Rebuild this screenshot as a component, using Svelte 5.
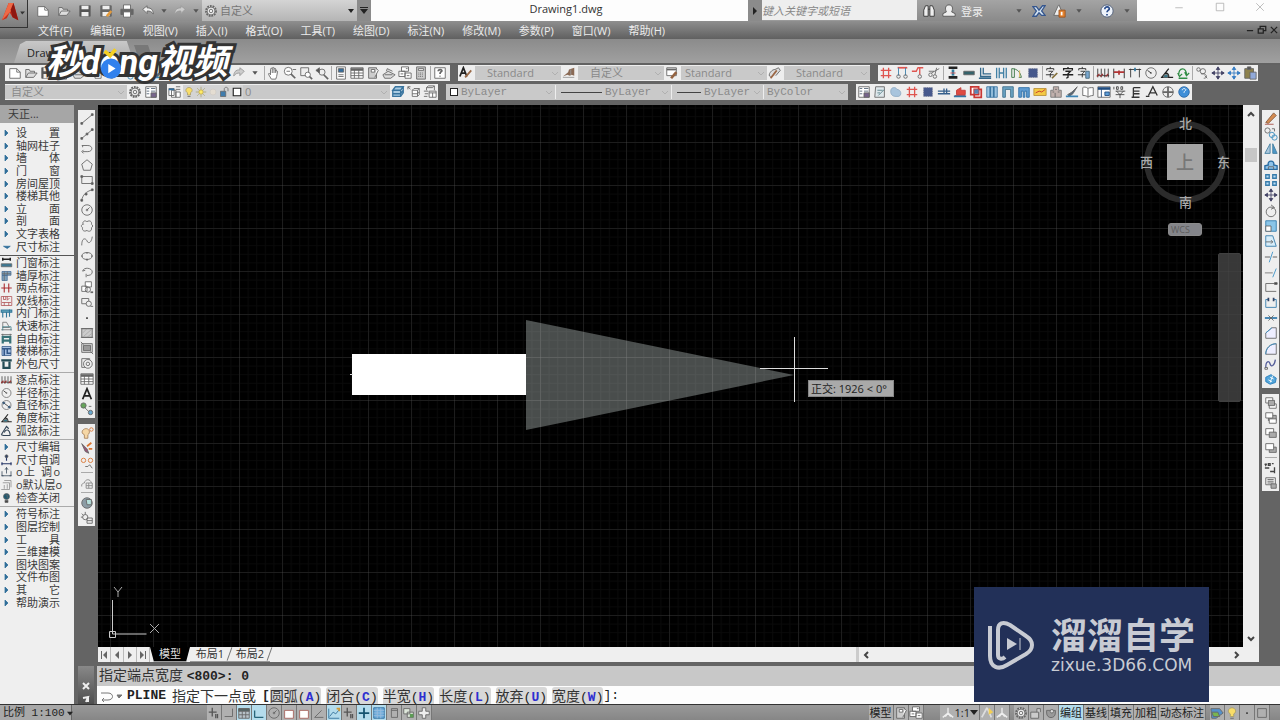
<script>
	const icons = {
		none: '',
		new: '<path d="M2 3h8l4 4v7H2z" fill="#fff"/><path d="M10 3v4h4"/>',
		open: '<path d="M2 13V4h4l1 2h5v2M2 13l3-5h10l-4 5z" fill="#ddd"/>',
		save: '<path d="M2 2h12v12H2z" fill="#555"/><path d="M4 2h8v4H4zM4 9h8v5H4z" fill="#eee" stroke="none"/>',
		saveas: '<path d="M2 2h12v12H2z" fill="#666"/><path d="M4 2h8v4H4zM4 9h8v5H4z" fill="#eee" stroke="none"/><path d="M9 14l5-6" stroke="#e39a3b" stroke-width="3"/>',
		print: '<path d="M4 6V1h8v5" fill="#fff"/><path d="M1 6h14v6H1z" fill="#666"/><path d="M4 9h8v6H4z" fill="#fff"/>',
		undo: '<path d="M2 6l5-4v2.500c5-.5 7 3 7 7-2-3-4-3.500-7-3.500V11z" fill="#eee" stroke="#666"/>',
		redo: '<path d="M14 6L9 2v2.500c-5-.5-7 3-7 7 2-3 4-3.500 7-3.500V11z" fill="#ccc" stroke="#999"/>',
		down: '<path d="M5 6h6l-3 4z" fill="#555" stroke="none"/>',
		gear: '<circle cx="8" cy="8" r="5.500" stroke="#666" fill="#eee" stroke-dasharray="2 1" stroke-width="2.500"/><circle cx="8" cy="8" r="4.500" fill="#eee" stroke="#666"/><circle cx="8" cy="8" r="2"/>',
		hand: '<path d="M5 15l-3-5c-1-2 1-2 2 0V4c0-2 2-2 2 0V3c0-2 2-2 2 0v1c0-2 2-2 2 0v2c1-1 2-1 2 1l-1 5-1 3zM6 4v4M8 4v4M10 4v4" fill="#fff"/>',
		zoom: '<circle cx="6" cy="6" r="4.500" fill="#fff"/><path d="M9 9l5 5" stroke-width="2"/><path d="M4 6h4M11 4h4"/>',
		zoomwin: '<path d="M2 2h9v9H2z"/><circle cx="10" cy="10" r="3" fill="#fff"/><path d="M12 12l3 3" stroke-width="2"/>',
		zoomprev: '<path d="M1 5l4-3v6z" fill="#555"/><circle cx="8" cy="7" r="3.500"/><path d="M10 10l5 5" stroke-width="2"/>',
		props: '<path d="M3 1h10v14H3z" fill="#fff"/><path d="M5 3h6v4H5z" fill="#326c9d"/><path d="M5 10h6M5 12h6"/>',
		table: '<path d="M1 2h14v12H1z" fill="#fff"/><path d="M1 4h14" stroke-width="3"/><path d="M1 8h14M1 11h14M5 4v10M10 4v10"/>',
		palette: '<path d="M3 2h9v12H3z" fill="#ccc"/><path d="M6 4h4v3H6zM12 3l2 2-4 8" fill="#fff"/>',
		sheet: '<path d="M1 10l6-4 8 4-5 4H3zM5 6l1-3 6 3" fill="#ddd"/><path d="M3 10h9"/>',
		copyset: '<path d="M4 1h8v5H4zM1 6h7v6H1zM8 8h7v6H8z" fill="#fff"/><path d="M3 9h3M10 11h3M9 3h2"/>',
		calc: '<path d="M3 1h10v14H3z" fill="#ccc"/><path d="M5 3h6v2H5z" fill="#fff"/><path d="M5 8h6M5 10h6M5 12h6" stroke-dasharray="1 1"/>',
		help: '<path d="M2 2h12v12H2z" fill="#fff"/><path d="M6 6c0-3 5-2 4 0-1 1-2 1-2 3M8 11v1" stroke-width="2"/>',
		textstyle: '<path d="M1 12L5 2l4 10M3 8h5" stroke="#222" stroke-width="2"/><path d="M7 13l7-8" stroke="#9a6a48" stroke-width="2"/>',
		dimstyle: '<path d="M1 12l6-5 1-3 6-2v9l-3-1-2 1-3-1z" fill="#8a6a55" stroke="none"/><path d="M1 13h13M10 4v6" stroke="#999"/>',
		tabstyle: '<path d="M2 2h11v9H2z" fill="#fff"/><path d="M2 4h11" stroke-width="2"/><path d="M7 14l6-7" stroke="#946341" stroke-width="3"/>',
		mlstyle: '<path d="M3 12c-4 0 0-8 5-8l4-2 2 3-5 6" fill="#ddd"/><path d="M3 14l7-9" stroke="#9c6745" stroke-width="2"/>',
		layers: '<path d="M1 4h6v8H1zM4 6h5v8H4zM9 2h5M9 5h5M9 8h5v6H9z" fill="#fff"/><path d="M1 4h6v2H1z" fill="#2d6da0" stroke="none"/>',
		bulb: '<path d="M6 12V9C2 7 4 2 8 2s6 5 2 7v3z" fill="#f9dd68" stroke="#a79b69"/><path d="M6 14h4"/>',
		sun: '<circle cx="8" cy="8" r="3" fill="#ffeb67" stroke="#b09a45"/><path d="M8 1v3M8 12v3M1 8h3M12 8h3M3 3l2 2M11 11l2 2M13 3l-2 2M3 13l2-2" stroke="#a7a26c"/>',
		sun2: '<circle cx="8" cy="8" r="4" fill="#e4ddd2" stroke="#d0cbc6"/>',
		lock: '<path d="M2 7h7v7H2z" fill="#407cac"/><path d="M7 7V4c0-3 5-3 5 0v3"/>',
		square: '<path d="M3 3h10v10H3z" fill="#fff" stroke="#222" stroke-width="1.500"/>',
		stack: '<path d="M2 6l3-4h9l-3 4zM2 6v7h9V6M14 2v7l-3 4M2 10h9l3-4" fill="#a9cbe2" stroke="#39749e" stroke-width="1.500"/>',
		stack2: '<path d="M6 6l2-2h6l-2 2zM6 6v7h6V6M14 4v7l-2 2M6 10h6l2-2" fill="#fff"/><path d="M1 2l3 3M1 2h3M1 2v3"/>',
		stack3: '<path d="M4 3l2-2h7l-2 2zM1 7h5M2 10h4M1 13h4M4 3v3M13 1v5" /><path d="M7 7h8v7H7zM7 9h8M11 9v5" fill="#fff"/>',
		grid: '<path d="M5 2v12M11 2v12M2 5h12M2 11h12" stroke="#df5550" stroke-width="1.500"/>',
		axis: '<path d="M3 2h11" stroke="#df5550" stroke-width="2"/><path d="M4 2v9M12 2v9" stroke="#3a80ab"/><circle cx="4" cy="12" r="2"/><circle cx="12" cy="12" r="2"/>',
		axis2: '<path d="M1 6h5l2-4h6M10 2v8" stroke="#df5550" stroke-width="1.500"/><circle cx="10" cy="12" r="2"/>',
		cut: '<circle cx="4" cy="10" r="2"/><circle cx="9" cy="12" r="2"/><path d="M5 8l9-5M9 10l2-8M2 6h6"/>',
		wall: '<path d="M3 2h10M3 13h10" stroke="#222" stroke-width="3"/><path d="M8 4v7" stroke="#337d9e" stroke-width="3"/><path d="M5 8h6" stroke="#d55"/>',
		beam: '<path d="M2 6h12v4H2z" fill="#35636b"/>',
		corner: '<path d="M3 2v10h12M6 2v7h9M1 14h14" stroke="#34698c" stroke-width="1.500"/>',
		par: '<path d="M3 2v12M6 2v12M11 2v12M14 2v12M6 8h5" stroke="#4281a5" stroke-width="1.500"/>',
		arc: '<path d="M2 13V3c7 0 10 5 11 10h-3M5 3v10H2" stroke="#35713f"/><path d="M11 5v8" stroke="#d8b24b"/>',
		column: '<path d="M3 3h10v10H3z" fill="#46588c" stroke="#69718d" stroke-dasharray="1 1"/>',
		char: '<path d="M8 1v2M3 5V3h10v2M5 6h6L8 9v4l-2 1M2 10h12" stroke="#222" stroke-width="1.500"/>',
		charedit: '<path d="M6 1v2M2 5V3h8v2M4 6h5L6 9v4M1 10h9" stroke="#222"/><path d="M8 14l6-6" stroke="#836f3a" stroke-width="2"/>',
		chartab: '<path d="M6 1v2M2 5V3h8v2M4 6h5L6 9v4M1 10h9" stroke="#222"/><path d="M10 6h4v8h-4z" fill="#7ba8d0" stroke="#467"/>',
		dims: '<path d="M2 3v10M6 3v10M10 3v10M14 3v10M1 11h14" stroke="#333"/><path d="M1 12l3-3M5 12l3-3M11 12l3-3" stroke="#9b3333" stroke-width="1.500"/>',
		dim2: '<path d="M2 3v11M14 3v11" stroke="#222"/><path d="M2 7h12M8 5v5" stroke="#b23535" stroke-width="2"/>',
		dim3: '<path d="M3 3v10M13 3v10M1 4h14" stroke="#333"/><path d="M8 2v4" stroke="#357aa1" stroke-width="2"/>',
		radius: '<circle cx="8" cy="8" r="6"/><path d="M8 8L4 5M7 8h2" stroke="#222"/>',
		diameter: '<circle cx="8" cy="8" r="6"/><path d="M4 5l8 6" stroke="#222"/><path d="M3 4l3 1-2 2zM13 12l-3-1 2-2z" fill="#357" stroke="#357"/>',
		angle: '<path d="M1 13h14M2 13L10 3M6 8c3 0 4 2 4 5" stroke="#222" stroke-width="1.500"/><path d="M5 10h4v3H4z" fill="#2f7b91"/>',
		chord: '<path d="M1 13L8 2l3 3M3 14h10M5 10c2-5 7-5 8 4M1 13l3 1" stroke="#345" stroke-width="1.500"/>',
		arcdim: '<path d="M3 11C3 1 12 1 12 10M2 8l2 4 3-3M10 7l2 4 3-3M3 14h10" stroke="#318d45" stroke-width="1.500"/>',
		loop: '<circle cx="4" cy="4" r="2"/><circle cx="9" cy="6" r="3"/><path d="M7 9c7-1 8 5 3 5M11 11l3 3"/>',
		move: '<path d="M8 1v14M1 8h14M8 1L6 4h4zM8 15l-2-3h4zM1 8l3-2v4zM15 8l-3-2v4z" fill="#446" stroke="#446"/>',
		moveblue: '<path d="M8 1v14M1 8h14M8 1L6 4h4zM8 15l-2-3h4zM1 8l3-2v4zM15 8l-3-2v4z" fill="#357bc2" stroke="#357bc2"/>',
		paste: '<path d="M2 3h10v11H2z" fill="#8d814b"/><path d="M5 1h4v3H5z" fill="#555"/><path d="M8 7h7v8H8z" fill="#91a9d8"/>',
		list: '<path d="M2 2h12v12H2z" fill="#fff"/><path d="M3 4h3M3 7h3M3 10h3M8 4h5M8 7h5" stroke="#567"/><path d="M8 9h6v5H8z" fill="#76648c"/>',
		note: '<path d="M3 2h10v12H2z" fill="#dfe8ec"/><path d="M5 6h6M5 9h3M6 12l7-7" stroke="#577f87"/>',
		cloud: '<path d="M2 7c0-5 6-5 7-2 5 0 6 7 2 8H8C3 13 2 10 2 7z" fill="#a8c4dd" stroke="#8faac2"/>',
		wallfx: '<path d="M1 7h14M1 10h14M8 4v6M11 4v6" stroke="#355f8c" stroke-width="1.500"/>',
		roof: '<path d="M2 12h12M4 11V6l5-3v3h5v5z" fill="#df4a41" stroke="#c63b38"/><path d="M1 13h14" stroke="#3276a4" stroke-width="2"/>',
		room: '<path d="M2 2h9v9H2zM6 5h8v9H6z" fill="#fff" stroke="#c93733" stroke-width="2"/><path d="M6 5h5v5H6z" fill="#5787b5" stroke="none"/>',
		bluepanel: '<path d="M2 2h12v12H2z" fill="#9dc5e2" stroke="#3b76a2"/><path d="M6 2v12M10 2v12" stroke="#3b76a2" stroke-width="2"/>',
		door: '<path d="M2 14V2h12v12h-3V5H5v9z" fill="#6ca5c5" stroke="#3e6f8b"/>',
		door2: '<path d="M2 14V3h12v11h-3V7H9v7H7V7H5v7z" fill="#5e9bd1" stroke="#2d6ea5"/>',
		yellow: '<path d="M1 4h14v8H1z" fill="#f4c944" stroke="#b8923b"/><path d="M3 9l4-2 3 1 4-3" stroke="#c4332c"/>',
		building: '<path d="M2 14V6h3V2h6v4h3v8z" fill="#c0b0ac" stroke="#777"/><path d="M4 8h2M7 5h2M10 8h2M7 9v5"/>',
		brush: '<path d="M3 11l5-3 6-6-5 8-4 3z" fill="#567"/><path d="M1 13h14" stroke="#3c84b4" stroke-width="2"/>',
		book: '<path d="M8 4c-2-2-5-2-6-1v9c2 0 4 0 6 2 1-1 3-2 6-2V3c-3 0-5 0-6 1zM8 4v10" fill="#fff"/>',
		tableblue: '<path d="M1 2h14v12H1z" fill="#fff"/><path d="M1 4h14" stroke="#214d80" stroke-width="3"/><path d="M5 4v10M9 8h5v4H9z" fill="#5e9ed6" stroke="#214d80"/>',
		vlabel: '<path d="M1 2v3M4 2h2v3H4zM9 2h2v3H9zM3 7h11M4 7l4 4 4-4M3 11h10M8 11v4" stroke="#444"/>',
		levels: '<path d="M5 3v11M3 14h9M5 3h8M5 7h7M5 10h7" stroke="#333" stroke-width="1.500"/>',
		letter: '<path d="M4 12L9 2l5 10M6 9h6M1 13h4" stroke="#333" stroke-width="1.500"/>',
		compass: '<circle cx="8" cy="8" r="6"/><path d="M8 2v12M2 8h12" stroke-width="2"/>',
		qblue: '<circle cx="8" cy="8" r="6" fill="#3f8fd8" stroke="#2a69a8"/><path d="M6 6c0-3 5-2 4 0-1 1-2 1-2 3" stroke="#fff"/>',
		line: '<path d="M2 13L14 3"/><path d="M1 12h2v2H1zM13 2h2v2h-2z" fill="#555"/>',
		xline: '<path d="M2 13L14 3"/><path d="M1 12h2v2H1zM13 2h2v2h-2zM7 7h2v2H7z" fill="#555"/>',
		pline: '<path d="M2 4h7c6 0 6 7 0 7H3M4 9l-2 2 2 2M3 4v2"/>',
		polygon: '<path d="M8 2l6 5-2 7H4L2 7z"/>',
		rect: '<path d="M2 4h12v8H2z"/><path d="M1 3h2v2H1zM13 11h2v2h-2z" fill="#555"/>',
		curve: '<path d="M2 14C3 8 7 4 14 2"/><path d="M1 13h2v2H1zM6 6h2v2H6zM13 1h2v2h-2z" fill="#444"/>',
		circle: '<circle cx="8" cy="8" r="6"/><circle cx="8" cy="8" r="1"/><path d="M8 8l3-3"/>',
		revcloud: '<path d="M4 3c2-2 3 0 4 0 3-2 6 0 5 3 2 1 2 3 0 4 1 4-3 5-5 3-3 2-6 0-5-3-2-1-2-4 1-4-1-1-1-2 0-3z"/>',
		spline: '<path d="M2 13C2 3 7 5 8 8s5 3 6-5"/>',
		ellipse: '<ellipse cx="8" cy="8" rx="6" ry="4"/><path d="M8 4v1M8 11v2M2 8h1M13 8h1" stroke-width="2"/>',
		ellarc: '<path d="M3 7c1-5 11-4 11 1 0 3-3 4-6 4M7 10v4M3 7l3-1"/>',
		insert: '<path d="M6 2h7v6H6zM2 7h6v6H2z" fill="#fff"/><circle cx="9" cy="11" r="3"/><path d="M12 14h3" stroke-width="2"/>',
		block: '<path d="M2 4h8v6H2z"/><circle cx="10" cy="10" r="3" fill="#eee"/><path d="M12 13h3"/>',
		dot: '<path d="M7 7h2v2H7z" fill="#444" stroke="none"/>',
		hatch: '<path d="M2 3h12v10H2z" fill="#ccc"/><path d="M4 12l9-8M3 8l5-5M8 13l6-5" stroke="#aaa"/><path d="M1 3h14M1 13h14"/>',
		gradient: '<path d="M2 3h12v10H2z" fill="#ddd"/><path d="M4 5h8v6H4z" fill="#999"/><path d="M1 1l3 3M12 12l3 3"/>',
		region: '<path d="M2 3h9v10H2z"/><circle cx="9" cy="9" r="5" fill="#eee"/><circle cx="9" cy="9" r="2"/>',
		mtext: '<path d="M3 14L8 2l5 12M5 10h6" stroke="#222" stroke-width="2"/>',
		nodes: '<circle cx="4" cy="4" r="3" fill="#65a45a"/><circle cx="12" cy="12" r="2.500" fill="#68a9d0"/><path d="M5 6l5 5M10 5h3"/>',
		bulbo: '<path d="M5 14v-4C0 8 3 3 7 3s5 5 2 7v4z" fill="#f6d7a5" stroke="#a8845f"/><circle cx="13" cy="4" r="2" stroke="#d97632"/>',
		brusho: '<path d="M2 3l6 6 2 5-4-2z" fill="#957"/><path d="M8 6l5-4M10 9h4" stroke="#d97632" stroke-width="2"/>',
		dotso: '<circle cx="4" cy="5" r="2.500" stroke="#d97632"/><circle cx="12" cy="5" r="2.500" stroke="#d97632"/><path d="M6 12h3l2-2 3 4"/>',
		cloudgrid: '<path d="M2 12c-1-3 2-4 3-4 1-5 7-5 8 0M7 8h7v6H7zM7 11h7M10 8v6" stroke="#888"/>',
		globe: '<circle cx="8" cy="8" r="6" fill="#8c9ca5"/><path d="M7 4h6v6H8z" fill="#b6e0dc"/>',
		sungrid: '<circle cx="6" cy="7" r="3"/><path d="M6 1v3M1 7h2M2 3l2 2M8 8h6v6H8zM8 11h6"/>',
		eraser: '<path d="M2 12L11 1l3 3-9 9z" fill="#d48b51" stroke="#855c40"/><path d="M1 14h10" stroke="#a64e45"/>',
		copy: '<circle cx="4" cy="4" r="3"/><circle cx="9" cy="9" r="3" stroke="#398bbd"/><circle cx="12" cy="12" r="3" stroke="#398bbd"/><path d="M9 2h3v3"/>',
		mirror: '<path d="M7 2v11H1z" fill="#aac7dc" stroke="#437e9f"/><path d="M10 2v11h5z" fill="#4f99c8" stroke="#437e9f"/>',
		offset: '<path d="M1 13V9l4-1c-2-6 8-6 6 0l4 1v4z" fill="#8fc3e8" stroke="#286ca3" stroke-width="1.500"/><path d="M5 13v-3h6v3"/>',
		array: '<path d="M2 2h4v4H2zM10 2h4v4h-4zM2 10h4v4H2zM10 10h4v4h-4z" fill="#b9dcf5" stroke="#377cab" stroke-width="1.500"/>',
		ring: '<circle cx="8" cy="9" r="5.500"/><path d="M8 1l4 3-4 2"/>',
		scale: '<path d="M2 2h12v12H2z" fill="#8ac5e8" stroke="#347bad"/><path d="M2 8h6v6H2z" fill="#fff"/>',
		stretch: '<path d="M2 2h8l4 12H2z" fill="#d8edf9" stroke="#347bad"/><path d="M2 9h8M8 7l2 2-2 2"/>',
		trim: '<path d="M1 8h6M10 8h5" stroke="#555"/><path d="M6 14l4-12" stroke="#3a91c7"/>',
		extend: '<path d="M1 9h9" stroke="#777"/><path d="M10 14l4-10" stroke="#3a91c7"/>',
		break1: '<path d="M2 13V4h11M2 13h12"/><path d="M12 3h3v2h-3z" fill="#444"/>',
		break2: '<path d="M5 4H2v9h12V4h-3" stroke="#347bad"/><path d="M5 2v4M11 2v4" stroke="#346" stroke-width="2"/>',
		join: '<path d="M1 8h14" stroke="#347bad" stroke-width="2"/><path d="M5 5l3 3-3 3M11 5L8 8l3 3"/>',
		chamfer: '<path d="M2 14V8l7-6h5v12z" fill="#eef"/><path d="M2 8l7-6" stroke="#3a91c7"/>',
		fillet: '<path d="M2 14C2 7 7 2 14 2v12z" fill="#eef"/><path d="M2 14C2 7 7 2 14 2" stroke="#3a91c7"/>',
		blend: '<path d="M2 12C2 4 6 4 7 8s5 2 6-5" stroke="#555e9a" stroke-width="1.500"/><path d="M1 12h3v2H1z"/>',
		explode: '<path d="M2 6l6-3 6 4-1 5-6 2-5-3z" fill="#54a5d9" stroke="#257dbb"/><path d="M7 6l4 2M5 9l4 2M10 4L7 12" stroke="#fff"/>',
		order: '<path d="M2 2h8v6H2zM6 9h8v5H6z" fill="#fff"/><path d="M5 5h7v6H5z" fill="#aaa"/>',
		order2: '<path d="M5 5h9v6H5z" fill="#aaa"/><path d="M2 2h8v6H2zM6 9h8v5H6z" fill="#fff"/>',
		order3: '<path d="M2 3h9v7H2z" fill="#fff"/><path d="M6 7h8v6H6z" fill="#aaa"/>',
		order4: '<path d="M6 7h8v6H6z" fill="#aaa"/><path d="M2 3h9v7H2z" fill="#fff"/>',
		abc: '<path d="M1 3l1 2 1-2M5 3h2v2H5zM9 3h2M1 8h5M12 7v5H7M12 12v2" stroke="#444" stroke-width="1.500"/>',
		order5: '<path d="M2 2h11v8H2zM4 4h7M4 6h7M4 8h7"/><path d="M8 9h6v5H8z" fill="#aaa"/>',
		windim: '<path d="M2 3h12M3 1v4M13 1v4" stroke="#222" stroke-width="2"/><path d="M1 9h14v4H1z" fill="#3c7792"/>',
		thick: '<path d="M2 2h12v5H2zM2 7h7v7H2z" fill="#7fa2bd" stroke="#466e97"/><path d="M2 5h12M5 2v12M9 2v5"/>',
		redcross: '<path d="M1 8h14M5 2v12M11 2v12M4 7l2 2M10 9l2-2" stroke="#ac3136" stroke-width="1.500"/>',
		redbox: '<path d="M1 2v12h14V2zM4 2v4h3V2M9 2v5l3-3M2 10h12M5 10v4M11 10v4" stroke="#ac4a4e"/>',
		indoor: '<path d="M1 4h14v3H1zM3 7v7M8 7v7M12 3v10" fill="#61a5bb" stroke="#347799" stroke-width="1.500"/>',
		quick: '<path d="M3 10V3h5l4 7H3zM1 13h14" fill="#eee"/><path d="M3 14V9h11v5" stroke="#367986"/>',
		tee: '<path d="M3 14V5h10v9M3 10h10" stroke="#387277" stroke-width="3"/><path d="M1 2h14M3 1v3M13 1v3"/>',
		stairs: '<path d="M2 2h12v12H2z" fill="#a6bfe0" stroke="#335787"/><path d="M2 5h12M5 6v8M9 6v5h5" stroke="#335787" stroke-width="2"/>',
		outer: '<path d="M1 3h14M4 5v8h8V5" stroke="#234b55" stroke-width="3"/>',
		selfdim: '<path d="M8 2v7M1 13h14M2 11v4M14 11v4" stroke="#243466" stroke-width="1.500"/><circle cx="8" cy="3" r="2" fill="#346"/>',
		tune: '<path d="M2 7v6h12V7M8 2v8M6 5l2-3 2 3M1 13h3M12 13h3" stroke="#345"/>',
		layer: '<path d="M5 2h9v9M3 5h9v9H1M5 8v5M9 7v6" stroke="#888"/>',
		check: '<circle cx="8" cy="6" r="4" fill="#1e5870"/><path d="M6 11h4v3H6z" fill="#444"/><path d="M7 4h2v4"/>',
		right: '<path d="M6 4l4 4-4 4z" fill="#2f6e9a" stroke="#2f6e9a"/>',
		collapse: '<path d="M4 7h9l-4 3z" fill="#2f6e9a" stroke="#2f6e9a"/>',
		binoc: '<path d="M2 14V7l2-5h3v12H2zM9 14V2h3l2 5v7H9zM7 6h2" fill="#eee" stroke="#333"/>',
		user: '<path d="M5 9C3 5 4 1 8 1s5 4 3 8l4 2v3H1v-3z" fill="#eee" stroke="#555"/>',
		exchange: '<path d="M1 3h4l3 4 4-5h3l-4 6 4 5h-4l-3-3-3 4H1l4-6z" fill="#d4e4f2" stroke="#35568e" stroke-width="1.500"/>',
		thumb: '<path d="M8 1l5 12H2L7 2z" fill="#eee"/><path d="M8 7h7v8H8z" fill="#e48330" stroke="#9d541c"/><path d="M11 9v4" stroke="#fff" stroke-width="2"/>',
		helpround: '<circle cx="8" cy="8" r="7" fill="#eef3fa" stroke="#4c5c78"/><path d="M5.500 6c0-4 6-3 5 0-.5 1-2.500 1.500-2.500 3.500M8 11.500v1.500" stroke="#2b4d8c" stroke-width="2"/>',
		min: '<path d="M3 9h10"/>',
		max: '<path d="M3 3h10v10H3z"/>',
		restore: '<path d="M5 6V2h9v7h-4M2 6h8v7H2z"/>',
		close: '<path d="M3 3l10 10M13 3L3 13"/>',
		snap: '<path d="M6 2v10M2 7h9M10 9v5M12 9v5" stroke="#555" stroke-width="1.500"/>',
		ortho: '<path d="M12 3v9H3"/>',
		statgrid: '<path d="M2 3h12v11H2z" fill="#b7c2c8"/><path d="M2 3h12v3H2z" fill="#566"/><path d="M6 6v8M10 6v8M2 10h12"/>',
		polar: '<path d="M3 13V5M3 13h10" stroke="#286579" stroke-width="1.500"/>',
		osnap: '<path d="M3 5h10v9H3z" fill="#fff" stroke="#a7625b"/>',
		ang: '<path d="M13 13H3l8-8"/>',
		plus: '<path d="M8 2v12M2 8h12" stroke="#14536f" stroke-width="2"/>',
		graph: '<path d="M2 3v11h12M3 12l4-5 3 2 4-5" stroke="#34719a"/><path d="M11 3h3v3" stroke="#d29a36" stroke-width="2"/>',
		pad: '<path d="M5 3h7v10H5z"/><path d="M5 5h7"/>',
		bluegrid: '<path d="M2 2h12v12H2z" fill="#6daddb" stroke="#2f6999"/><path d="M2 5h12M2 8h12M2 11h12M6 2v12M10 2v12" stroke="#9bd"/>',
		greencopy: '<path d="M2 3h7v6H2zM6 7h7v6H6z" fill="#dfe8dc"/><path d="M9 9h4v4H9z" fill="#5c9c55" stroke="none"/>',
		whiteplus: '<path d="M6 2h4v4h4v4h-4v4H6v-4H2V6h4z" fill="#eee"/>',
		person: '<path d="M8 2v6M8 8l-6 5M8 8l6 5M5 12l3-4 3 4" stroke="#eee" stroke-width="1.500"/>',
		scalestar: '<path d="M8 2l-6 11M8 2l5 11" stroke="#ddd" stroke-width="2"/><path d="M10 2l5 5-5 3z" fill="#f4cf53" stroke="none"/>',
		padlock: '<path d="M2 7h9v7H2zM9 7V3h4v4" fill="#ccc"/>',
		ball: '<path d="M3 5h10v3c0 7-10 7-10 0z" fill="#999"/><circle cx="9" cy="6" r="2" fill="#ddd"/>',
		tray: '<path d="M1 3h10l4 5-8 6H2z" fill="#5491cb"/><path d="M2 7h7l2 5H4z" fill="#79b550"/>'
	};

	const quick = ['new', 'open', 'save', 'saveas', 'print', 'undo', 'down', 'redo', 'down'];
	const menus = ['文件(F)', '编辑(E)', '视图(V)', '插入(I)', '格式(O)', '工具(T)', '绘图(D)', '标注(N)', '修改(M)', '参数(P)', '窗口(W)', '帮助(H)'];
	const standard = ['new', 'open', 'save', 'print', 'sheet', 'copyset', 'cut', 'copy', 'paste', 'brush', 'block', 'undo', 'down', 'none', 'redo', 'down', '|', 'hand', 'zoom', 'zoomwin', 'zoomprev', '|', 'props', 'table', 'palette', 'sheet', 'copyset', 'calc', '|', 'help'];
	const styles = [
		{ icon: 'textstyle', label: 'Standard', name: '文字样式' },
		{ icon: 'dimstyle', label: '自定义', name: '标注样式' },
		{ icon: 'tabstyle', label: 'Standard', name: '表格样式' },
		{ icon: 'mlstyle', label: 'Standard', name: '多重引线样式' }
	];
	const tarch1 = ['grid', 'axis', 'axis2', 'cut', '|', 'wall', 'beam', 'corner', 'par', 'arc', 'column', '|', 'charedit', 'char', 'chartab', '|', 'dims', 'dim2', 'dim3', 'radius', 'angle', 'arcdim', '|', 'loop', 'move', 'moveblue', 'paste'];
	const tarch2 = ['list', 'note', 'cloud', 'grid', 'column', 'wallfx', 'roof', 'room', 'bluepanel', 'door', 'door2', 'yellow', 'building', 'brush', 'book', 'tableblue', 'vlabel', 'levels', 'letter', 'compass', 'qblue'];
	const draw = ['line', 'xline', 'pline', 'polygon', 'rect', 'curve', 'circle', 'revcloud', 'spline', 'ellipse', 'ellarc', 'insert', 'block', 'dot', 'hatch', 'gradient', 'region', 'table', 'mtext', 'nodes'];
	const draw2 = ['bulbo', 'brusho', 'dotso', '|', 'cloudgrid', '|', 'globe', 'sungrid'];
	const modify = ['eraser', 'copy', 'mirror', 'offset', 'array', 'move', 'ring', 'scale', 'stretch', 'trim', 'extend', 'break1', 'break2', 'join', 'chamfer', 'fillet', 'blend', 'explode'];
	const modify2 = ['order', 'order2', 'order3', 'order4', '|', 'abc', 'order5'];

	const groups = [
		{ size: 'ten', rows: [['right', '设 置'], ['right', '轴网柱子'], ['right', '墙 体'], ['right', '门 窗'], ['right', '房间屋顶'], ['right', '楼梯其他'], ['right', '立 面'], ['right', '剖 面'], ['right', '文字表格'], ['collapse', '尺寸标注']] },
		{ size: 'nine', rows: [['windim', '门窗标注'], ['thick', '墙厚标注'], ['redcross', '两点标注'], ['redbox', '双线标注'], ['indoor', '内门标注'], ['quick', '快速标注'], ['tee', '自由标注'], ['stairs', '楼梯标注'], ['outer', '外包尺寸']] },
		{ size: 'five', rows: [['dims', '逐点标注'], ['radius', '半径标注'], ['diameter', '直径标注'], ['angle', '角度标注'], ['chord', '弧弦标注']] },
		{ size: 'five', rows: [['right', '尺寸编辑'], ['selfdim', '尺寸自调'], ['tune', 'o上 调o'], ['layer', 'o默认层o'], ['check', '检查关闭']] },
		{ size: 'eight', rows: [['right', '符号标注'], ['right', '图层控制'], ['right', '工 具'], ['right', '三维建模'], ['right', '图块图案'], ['right', '文件布图'], ['right', '其 它'], ['right', '帮助演示']] }
	];

	const options = [['圆弧', 'A'], ['闭合', 'C'], ['半宽', 'H'], ['长度', 'L'], ['放弃', 'U'], ['宽度', 'W']];
	const toggles = ['snap', 'ortho', 'statgrid', 'polar', 'circle', 'osnap', 'osnap', 'ang', 'graph', 'snap', 'plus', 'bluegrid', 'pad', 'greencopy', 'whiteplus'];
	const lit = [2, 3, 8, 10, 11];
	const modes = ['编组', '基线', '填充', '加粗', '动态标注'];
</script>

{#snippet icon(name)}
	<svg class="icon" viewBox="0 0 16 16" aria-hidden="true">{@html icons[name]}</svg>
{/snippet}

{#snippet bar(list)}
	{#each list as name}
		{#if name === '|'}
			<span class="sep"></span>
		{:else}
			<button class="tool" aria-label={name}>{@render icon(name)}</button>
		{/if}
	{/each}
{/snippet}

{#snippet combo(label, name, kind)}
	<span class="combo {kind}">
		<select aria-label={name}><option>{label}</option></select>
		<svg class="chevron" viewBox="0 0 8 8" aria-hidden="true"><path d="M1 3l3 3 3-3" /></svg>
	</span>
{/snippet}

<div class="app">
	<header class="titlebar">
		<button class="logo" aria-label="菜单">
			<svg viewBox="0 0 28 28" aria-hidden="true">
				<path d="M2 21L9 3h5l5 18-6-3-3-5-3 6z" fill="#c6301c" />
				<path d="M9 3h5l-2 8-10 10z" fill="#ef6946" />
				<path d="M14 3l5 18-6-3-2-8z" fill="#8f1710" />
				<path d="M21 12h5l-3 3z" fill="#333" />
			</svg>
		</button>
		<div class="quick">{@render bar(quick)}</div>
		<div class="workspace">
			{@render icon('gear')}
			<select aria-label="工作空间"><option>自定义</option></select>
			<svg class="arrow" viewBox="0 0 8 8" aria-hidden="true"><path d="M1 2h6L4 6z" /></svg>
		</div>
		<button class="more" aria-label="更多"><svg class="arrow" viewBox="0 0 8 8"><path d="M0 0h8v1H0zM0 2h8L4 7z" /></svg></button>
		<h1>Drawing1.dwg</h1>
		<button class="expand" aria-label="展开"><svg class="arrow" viewBox="0 0 8 8"><path d="M2 0v8l4-4z" /></svg></button>
		<input class="search" type="text" aria-label="搜索" placeholder="键入关键字或短语" />
		<div class="account">
			{@render bar(['binoc', 'user'])}
			<a href="#login">登录</a>
			<span class="space"></span>
			{@render bar(['down', 'exchange', 'thumb', 'down'])}
			<span class="gap"></span>
			{@render bar(['helpround', 'down'])}
		</div>
		<div class="window">{@render bar(['min', 'max', 'close'])}</div>
	</header>

	<nav class="menubar">
		{#each menus as menu}<button>{menu}</button>{/each}
		<div class="child">{@render bar(['min', 'restore', 'close'])}</div>
	</nav>

	<div class="docs">
		<button class="doc">Draw</button>
		<button class="adddoc" aria-label="新建图形"></button>
		<div class="brand">秒d<span class="ball">o<svg viewBox="0 0 24 34" aria-hidden="true"><path d="M5 3l6 5 6-7" fill="none" stroke="#f5cf22" stroke-width="4" /><circle cx="12" cy="22" r="11" fill="#3181ed" /><path d="M9 17l8 5-8 5z" fill="#fff" /></svg></span>ng视频</div>
	</div>

	<div class="toolrow">
		<div class="strip std">{@render bar(standard)}</div>
		<div class="strip">
			{#each styles as s}
				<span class="styleitem">
					{@render icon(s.icon)}
					{@render combo(s.label, s.name, 'style')}
				</span>
			{/each}
		</div>
		<div class="strip">{@render bar(tarch1)}</div>
	</div>

	<div class="toolrow">
		<div class="strip">
			{@render combo('自定义', '工作空间', 'ws')}
			{@render bar(['gear', 'list'])}
		</div>
		<div class="strip">
			{@render bar(['layers'])}
			<span class="layerstate">
				{#each ['bulb', 'sun', 'sun2', 'lock', 'square'] as name}{@render icon(name)}{/each}
			</span>
			{@render combo('0', '图层', 'layer')}
			{@render bar(['stack', 'stack2', 'stack3'])}
		</div>
		<div class="strip plain">
			<span class="prop"><span class="swatch"></span>{@render combo('ByLayer', '颜色', 'mono')}</span>
			<span class="prop"><span class="rule"></span>{@render combo('ByLayer', '线型', 'mono')}</span>
			<span class="prop"><span class="rule short"></span>{@render combo('ByLayer', '线宽', 'mono')}</span>
			<span class="prop">{@render combo('ByColor', '打印样式', 'mono')}</span>
		</div>
		<div class="strip">{@render bar(tarch2)}</div>
	</div>

	<main>
		<aside class="palette">
			<h2>天正...</h2>
			{#each groups as group}
				<ul class={group.size}>
					{#each group.rows as [glyph, text]}
						<li>{@render icon(glyph)}<button>{text}</button></li>
					{/each}
				</ul>
			{/each}
		</aside>

		<div class="right">
			<div class="stage">
				<div class="side">
					<div class="column tall">{@render bar(draw)}</div>
					<div class="column">{@render bar(draw2)}</div>
				</div>

				<div class="view">
					<div class="canvasrow">
						<div class="canvas">
							<svg class="drawing" aria-hidden="true">
								<defs>
									<pattern id="minor" width="8.6" height="8.6" patternUnits="userSpaceOnUse" x="12" y="37">
										<path d="M0 .5h9M.5 0v9" stroke="#fff" stroke-opacity=".04" />
									</pattern>
									<pattern id="major" width="43" height="43" patternUnits="userSpaceOnUse" x="12" y="37">
										<path d="M0 .5h43M.5 0v43" stroke="#fff" stroke-opacity=".08" />
									</pattern>
								</defs>
								<path d="M428 215v110l268-55z" fill="#494d4c" />
								<rect width="100%" height="100%" fill="url(#minor)" />
								<rect width="100%" height="100%" fill="url(#major)" />
								<path d="M254 249h174v41H254z" fill="#fff" />
								<path d="M252 269.500h3M662 263.500h68M696.500 232v65" stroke="#ddd" />
								<path d="M14.500 495v34h34M11.500 526.500h6v6h-6z" stroke="#ccc" fill="none" />
								<path d="M16 482l4 5 4-5M20 487v5M52 519l9 9M61 519l-9 9" stroke="#aaa" fill="none" />
							</svg>
							<output class="tip">正交: 1926 &lt; 0°</output>
							<div class="cube">
								<span class="n">北</span><span class="w">西</span>
								<button>上</button>
								<span class="e">东</span><span class="s">南</span>
							</div>
							<button class="wcs">WCS</button>
							<div class="navbar"></div>
						</div>
						<div class="vscroll">
							<button aria-label="向上"><svg viewBox="0 0 8 8"><path d="M1 6l3-3 3 3" /></svg></button>
							<span class="thumb"></span>
							<button aria-label="向下"><svg viewBox="0 0 8 8"><path d="M1 2l3 3 3-3" /></svg></button>
						</div>
					</div>
					<div class="tabs">
						<button class="step" aria-label="第一个"><svg viewBox="0 0 8 8"><path d="M1 0h1v8H1zM7 0v8L3 4z" /></svg></button>
						<button class="step" aria-label="上一个"><svg viewBox="0 0 8 8"><path d="M6 0v8L2 4z" /></svg></button>
						<button class="step" aria-label="下一个"><svg viewBox="0 0 8 8"><path d="M2 0v8l4-4z" /></svg></button>
						<button class="step" aria-label="最后一个"><svg viewBox="0 0 8 8"><path d="M6 0h1v8H6zM1 0v8l4-4z" /></svg></button>
						<button class="tab model">模型</button>
						<button class="tab">布局1</button>
						<button class="tab">布局2</button>
						<div class="hscroll">
							<button aria-label="向左"><svg viewBox="0 0 8 8"><path d="M5 1L2 4l3 3" /></svg></button>
							<button aria-label="向右"><svg viewBox="0 0 8 8"><path d="M3 1l3 3-3 3" /></svg></button>
						</div>
					</div>
				</div>

				<div class="side">
					<div class="column mid">{@render bar(modify)}</div>
					<div class="column">{@render bar(modify2)}</div>
				</div>
			</div>

			<section class="command">
				<div class="grip">
					<button aria-label="关闭"><svg viewBox="0 0 8 8"><path d="M1 1l6 6M7 1L1 7" /></svg></button>
					<button aria-label="设置"><svg viewBox="0 0 8 8"><path d="M1 3l5-1-2 5M6 2v5" /></svg></button>
				</div>
				<div class="lines">
					<p class="history">指定端点宽度 <code>&lt;800&gt;: 0</code></p>
					<p class="prompt">
						<svg class="cmdicon" viewBox="0 0 24 16" aria-hidden="true"><path d="M2 5h7c6 0 6 7 0 7H3M5 10l-2 2 2 2" /><path d="M18 7h5l-3 3z" fill="#777" /></svg>
						<code>PLINE</code><span class="ask">指定下一点或</span><code>[</code>
						{#each options as [text, key]}
							<button class="option">{text}<code>(<b>{key}</b>)</code></button>
						{/each}
						<code class="last">]:</code>
					</p>
				</div>
			</section>
		</div>
	</main>

	<footer class="status">
		<button class="ratio">比例 1:100 <svg class="arrow" viewBox="0 0 8 8"><path d="M0 1h8L4 6z" /></svg></button>
		<div class="coords"></div>
		{#each toggles as name, i}
			<button class="toggle" class:lit={lit.includes(i)} aria-label={name}>{@render icon(name)}</button>
		{/each}
		<span class="space"></span>
		<button class="word">模型</button>
		<button class="toggle" aria-label="布局">{@render icon('palette')}</button>
		<button class="toggle" aria-label="快速查看">{@render icon('copyset')}</button>
		<span class="hole"></span>
		<button class="word">{@render icon('person')}1:1<svg class="arrow" viewBox="0 0 8 8"><path d="M0 1h8L4 6z" /></svg></button>
		<button class="toggle" aria-label="注释可见性">{@render icon('scalestar')}</button>
		<button class="toggle" aria-label="自动添加">{@render icon('person')}</button>
		<span class="notch"></span>
		<button class="toggle" aria-label="切换工作空间">{@render icon('gear')}</button>
		<button class="toggle" aria-label="锁定">{@render icon('padlock')}</button>
		<button class="toggle" aria-label="硬件加速">{@render icon('ball')}</button>
		{#each modes as mode, i}
			<button class="word" class:lit={i === 0}>{mode}</button>
		{/each}
		<span class="notch"></span>
		<button class="toggle" aria-label="托盘">{@render icon('tray')}</button>
		<button class="toggle" aria-label="提示">{@render icon('bulb')}</button>
		<button class="toggle" aria-label="更多">{@render icon('dot')}</button>
		<button class="toggle" aria-label="全屏">{@render icon('max')}</button>
		<span class="end"></span>
	</footer>

	<div class="sponsor">
		<svg viewBox="0 0 48 52" aria-hidden="true">
			<path d="M3 7v30c0 12 9 14 17 9l19-11c8-5 8-13 0-18L23 6C16 2 11 4 11 11v25c0 4 4 5 7 2" />
			<path d="M20 19l10 6-10 6z" fill="#c8cbd3" stroke="none" />
			<path d="M33 19v12" class="thin" />
		</svg>
		<div>
			<strong>溜溜自学</strong>
			<span>zixue.3D66.COM</span>
		</div>
	</div>
</div>

<style>
	:global(body) {
		margin: 0;
		background: #646464;
	}

	.app {
		position: relative;
		display: flex;
		flex-direction: column;
		height: 100vh;
		overflow: hidden;
		font-family: "Open Sans", "Noto Sans CJK SC", sans-serif;
		font-size: 11px;
		color: #333;
		background: #646464;
	}

	button,
	select,
	input {
		margin: 0;
		padding: 0;
		border: 0;
		border-radius: 0;
		background: none;
		font: inherit;
		color: inherit;
		appearance: none;
	}

	.icon {
		display: block;
		flex: none;
		width: 14px;
		height: 14px;
		fill: none;
		stroke: #666;
	}

	.tool {
		display: flex;
		flex: none;
		align-items: center;
		justify-content: center;
		width: 16px;
		height: 100%;
	}

	.sep {
		flex: none;
		width: 1px;
		height: 14px;
		margin: 0 1px;
		background: #aaa;
	}

	.arrow {
		width: 8px;
		height: 8px;
		fill: #222;
	}

	.space {
		flex: 1;
	}

	/* title bar */
	.titlebar {
		display: flex;
		height: 21px;
		flex: none;
		background: #fdfdfd;
	}

	.logo {
		position: absolute;
		z-index: 2;
		width: 28px;
		height: 28px;
		background: linear-gradient(#a8a8a8, #7c7c7c);
		border-right: 1px solid #333;
		border-bottom: 1px solid #333;
	}

	.quick {
		display: flex;
		width: 170px;
		padding-left: 32px;
		background: linear-gradient(#b4b4b4, #8d8d8d);
	}

	.quick .tool {
		width: 21px;
	}

	.quick .tool:nth-child(7),
	.quick .tool:nth-child(9) {
		width: 11px;
	}

	.workspace {
		display: flex;
		align-items: center;
		width: 151px;
		padding: 0 2px;
		gap: 2px;
		color: #777;
		background: linear-gradient(#d4d4d4, #b5b5b5);
	}

	.workspace select {
		flex: 1;
	}

	.more {
		width: 14px;
		background: #8b8b8b;
	}

	h1 {
		flex: 1;
		margin: 0;
		padding-left: 13px;
		font-size: 11px;
		font-weight: 400;
		line-height: 17px;
		text-align: center;
	}

	.expand {
		width: 14px;
		background: #8b8b8b;
	}

	.search {
		width: 155px;
		background: #eee;
		border-bottom: 1px solid #999;
		font-style: italic;
	}

	.search::placeholder {
		color: #888;
		opacity: 1;
	}

	.account {
		display: flex;
		align-items: center;
		width: 218px;
		padding-left: 2px;
		background: linear-gradient(#a4a4a4, #8a8a8a);
	}

	.account .tool {
		width: 20px;
	}

	.account a {
		padding-left: 2px;
		color: #eee;
		text-decoration: none;
	}

	.gap {
		width: 8px;
	}

	.window {
		display: flex;
		justify-content: space-between;
		width: 97px;
		height: 14px;
		padding: 0 12px 0 34px;
	}

	.window .icon {
		width: 12px;
		stroke: #aaa;
	}

	/* menu bar */
	.menubar {
		display: flex;
		align-items: center;
		height: 18px;
		flex: none;
		padding-left: 29px;
		color: #ececec;
		background: linear-gradient(#8f8f8f, #606060);
	}

	.menubar > button {
		padding: 0 9px;
	}

	.child {
		display: flex;
		margin-left: auto;
	}

	.child .tool {
		width: 12px;
	}

	.child .icon {
		width: 10px;
		height: 10px;
		stroke: #222;
		stroke-width: 2;
	}

	/* drawing tabs */
	.docs {
		position: relative;
		display: flex;
		align-items: flex-end;
		height: 24px;
		flex: none;
		padding-left: 14px;
		background: linear-gradient(#8b8b8b, #a0a0a0);
		border-bottom: 2px solid #626262;
	}

	.doc {
		width: 120px;
		height: 22px;
		padding-left: 13px;
		text-align: left;
		color: #222;
		background: linear-gradient(#c8c8c8, #aaa);
		clip-path: polygon(0 100%, 6px 15%, 12px 0, 94% 0, 100% 100%);
	}

	.adddoc {
		width: 20px;
		height: 18px;
		background: #787878;
		clip-path: polygon(0 0, 70% 0, 100% 100%, 30% 100%);
	}

	.brand {
		position: absolute;
		z-index: 3;
		left: 46px;
		top: 1px;
		font-family: Roboto, "Noto Sans CJK SC", sans-serif;
		font-size: 35px;
		font-weight: 700;
		font-style: italic;
		line-height: 46px;
		white-space: nowrap;
		color: #fff;
		-webkit-text-stroke: 6px #333;
		paint-order: stroke fill;
	}

	.ball {
		position: relative;
	}

	.ball svg {
		position: absolute;
		left: 0;
		bottom: 3px;
		width: 22px;
		height: 32px;
	}

	/* toolbars */
	.toolrow {
		display: flex;
		gap: 8px;
		height: 18px;
		flex: none;
		padding-left: 5px;
		box-sizing: border-box;
		border-bottom: 2px solid #646464;
	}

	.toolrow + .toolrow {
		height: 19px;
		padding-top: 1px;
	}

	.strip {
		display: flex;
		align-items: center;
		flex: none;
		background: #eee;
	}

	.std {
		width: 445px;
		padding-left: 2px;
		box-sizing: border-box;
		overflow: hidden;
	}

	.styleitem {
		display: flex;
		align-items: center;
		gap: 2px;
		width: 103px;
		padding-left: 1px;
		box-sizing: border-box;
	}

	.combo {
		display: flex;
		align-items: center;
		height: 14px;
		color: #8a8a8a;
		background: #c9c9c9;
	}

	.combo select {
		flex: 1;
		min-width: 0;
		height: 14px;
		line-height: 14px;
		padding-left: 6px;
	}

	.chevron {
		flex: none;
		width: 8px;
		height: 8px;
		margin-right: 2px;
		fill: none;
		stroke: #b0b0b0;
	}

	.style {
		flex: 1;
	}

	.style select {
		padding-left: 12px;
	}

	.styleitem:nth-child(3) select {
		padding-left: 4px;
	}

	.ws {
		width: 122px;
	}

	.layerstate {
		display: flex;
		height: 14px;
		align-items: center;
		background: #d4d4d4;
	}

	.layerstate .icon {
		width: 12px;
		height: 12px;
	}

	.layer {
		width: 147px;
	}

	.layer select {
		padding-left: 2px;
	}

	.plain {
		display: grid;
		grid-template-columns: 109fr 116fr 92fr 85fr;
		width: 402px;
		background: #c9c9c9;
	}

	.prop {
		display: flex;
		align-items: center;
	}

	.prop + .prop {
		border-left: 1px solid #eee;
	}

	.plain .combo {
		flex: 1;
	}

	.mono {
		font-family: "Liberation Mono", "Noto Sans CJK SC", monospace;
	}

	.mono select {
		padding-left: 3px;
	}

	.swatch {
		width: 6px;
		height: 6px;
		margin-left: 4px;
		border: 1px solid #222;
		background: #fff;
	}

	.rule {
		width: 41px;
		height: 1px;
		margin-left: 5px;
		background: #444;
	}

	.short {
		width: 24px;
	}

	/* work area */
	main {
		display: flex;
		flex: 1;
		min-height: 0;
		gap: 4px;
		padding-top: 3px;
	}

	.palette {
		width: 74px;
		flex: none;
		background: #efefef;
		color: #3a3a3a;
	}

	h2 {
		margin: 0;
		padding-left: 8px;
		font-size: 11px;
		font-weight: 400;
		line-height: 18px;
		background: #a6a6a6;
		border-bottom: 4px solid #efefef;
	}

	ul {
		display: grid;
		grid-auto-rows: 1fr;
		margin: 0;
		padding: 0 0 2px;
		list-style: none;
		border-bottom: 1px solid #aaa;
	}

	ul:last-child {
		border: 0;
	}

	ul + ul {
		padding-top: 1px;
	}

	.ten {
		height: 126px;
		border-color: #555;
	}

	.nine {
		height: 113px;
	}

	.eight {
		height: 101px;
	}

	.five {
		height: 63px;
	}

	li {
		display: flex;
		align-items: center;
		gap: 3px;
		min-height: 0;
	}

	li .icon {
		width: 13px;
		height: 12px;
	}

	li button {
		width: 44px;
		line-height: 12px;
		white-space: nowrap;
		text-align-last: justify;
	}

	.right {
		display: flex;
		flex: 1;
		flex-direction: column;
		min-width: 0;
	}

	.stage {
		display: flex;
		flex: 1;
		min-height: 0;
		gap: 3px;
		padding-right: 1px;
	}

	.side {
		display: flex;
		flex-direction: column;
		gap: 6px;
		width: 17px;
		flex: none;
		padding-top: 5px;
	}

	.column {
		display: flex;
		flex-direction: column;
		align-items: center;
		padding: 1px 0;
		background: #eee;
	}

	.column .tool {
		height: 15px;
	}

	.column .sep {
		width: 12px;
		height: 1px;
		margin: 2px 0;
	}

	.tall {
		height: 306px;
	}

	.mid {
		height: 276px;
	}

	.tall .tool,
	.mid .tool {
		flex: 1;
		min-height: 0;
	}

	.view {
		display: flex;
		flex: 1;
		flex-direction: column;
		min-width: 0;
	}

	.canvasrow {
		display: flex;
		flex: 1;
		min-height: 0;
	}

	.canvas {
		position: relative;
		flex: 1;
		overflow: hidden;
		background: #000;
	}

	.drawing {
		display: block;
		width: 100%;
		height: 100%;
	}

	.tip {
		position: absolute;
		left: 710px;
		top: 275px;
		width: 82px;
		padding-left: 2px;
		border: 1px solid #888;
		font-size: 11px;
		line-height: 15px;
		color: #222;
		background: #a9a9a9;
	}

	.cube {
		position: absolute;
		top: 16px;
		right: 17px;
		width: 70px;
		height: 70px;
		border: 6px solid #2b2b2b;
		border-radius: 50%;
		font-size: 13px;
		font-weight: 500;
		line-height: 16px;
		color: #aaa;
	}

	.cube button {
		position: absolute;
		left: 17px;
		top: 17px;
		width: 36px;
		height: 36px;
		font-size: 18px;
		color: #777;
		background: #a4a4a4;
	}

	.cube span {
		position: absolute;
	}

	.n {
		left: 29px;
		top: -12px;
	}

	.s {
		left: 29px;
		bottom: -13px;
	}

	.w {
		left: -10px;
		top: 27px;
	}

	.e {
		right: -10px;
		top: 27px;
	}

	.wcs {
		position: absolute;
		top: 118px;
		right: 41px;
		width: 34px;
		height: 13px;
		border: 1px solid #8b8b8b;
		border-radius: 3px;
		padding-left: 2px;
		font-size: 9px;
		line-height: 10px;
		text-align: left;
		color: #5c5c5c;
		background: #84858a;
	}

	.navbar {
		position: absolute;
		top: 148px;
		right: 2px;
		width: 21px;
		height: 147px;
		border: 1px solid #404040;
		border-radius: 2px;
		background: rgba(70, 70, 70, 0.8);
	}

	.vscroll {
		display: flex;
		flex-direction: column;
		width: 16px;
		padding: 1px 0;
		background: #eee;
	}

	.vscroll button,
	.hscroll button {
		width: 16px;
		height: 15px;
	}

	.vscroll svg,
	.hscroll svg,
	.grip svg {
		width: 8px;
		height: 8px;
		fill: none;
		stroke: #444;
		stroke-width: 2;
	}

	.thumb {
		height: 14px;
		margin: 27px 2px auto;
		background: #c6c6c6;
	}

	.tabs {
		display: flex;
		height: 15px;
		flex: none;
		color: #333;
		background: #efefef;
	}

	.step {
		width: 13px;
		border-right: 1px solid #bbb;
	}

	.step svg {
		width: 8px;
		height: 8px;
		fill: #666;
	}

	.tab {
		position: relative;
		width: 40px;
		line-height: 14px;
		border-bottom: 1px solid #999;
	}

	.tab::after {
		content: "";
		position: absolute;
		right: 0;
		top: 0;
		width: 1px;
		height: 14px;
		background: #777;
		transform: rotate(20deg);
	}

	.model {
		color: #ddd;
		background: #000;
		clip-path: polygon(0 0, 100% 0, 90% 100%, 10% 100%);
	}

	.hscroll {
		display: flex;
		justify-content: space-between;
		flex: 0 1 403px;
		margin-left: auto;
		padding-right: 15px;
		box-sizing: border-box;
		border-left: 3px solid #ccc;
	}

	/* command line */
	.command {
		display: flex;
		height: 38px;
		flex: none;
		margin-top: 4px;
		gap: 3px;
	}

	.grip {
		display: flex;
		flex-direction: column;
		justify-content: space-between;
		width: 16px;
		padding-top: 12px;
		background: linear-gradient(#888, #4e4e4e);
	}

	.grip button {
		height: 13px;
	}

	.grip svg {
		stroke: #eee;
	}

	.lines {
		flex: 1;
		font-size: 14px;
		line-height: 18px;
		color: #333;
	}

	code {
		font-family: "Liberation Mono", monospace;
		font-size: 13px;
		font-weight: 700;
		color: #222;
		white-space: pre;
	}

	p {
		margin: 0;
		padding-left: 2px;
	}

	.history {
		background: #c8c8c8;
	}

	.prompt {
		display: flex;
		align-items: center;
		height: 20px;
		line-height: 18px;
		background: #fdfdfd;
	}

	.cmdicon {
		width: 24px;
		height: 16px;
		margin-right: 4px;
		fill: none;
		stroke: #777;
	}

	.ask {
		padding: 0 6px;
	}

	.option {
		margin-right: 5px;
		border-radius: 3px;
		line-height: 17px;
		background: #d8d8d8;
	}

	.option code,
	.last {
		font-weight: 400;
	}

	.option:last-of-type {
		margin-right: 0;
	}

	.option b {
		color: #2f2fd0;
	}

	/* status bar */
	.status {
		display: flex;
		height: 15px;
		flex: none;
		overflow: hidden;
		line-height: 15px;
		color: #222;
		background: linear-gradient(#999, #868686);
		border-top: 1px solid #333;
	}

	.ratio {
		display: flex;
		align-items: center;
		gap: 2px;
		width: 72px;
		height: 15px;
		padding: 2px 0 0 3px;
		font-family: "Liberation Mono", "Noto Sans CJK SC", monospace;
		line-height: 13px;
		white-space: nowrap;
		border-right: 1px solid #666;
		background: #a8a8a8;
	}

	.ratio .arrow {
		flex: none;
		width: 6px;
	}

	.coords {
		width: 135px;
	}

	.toggle {
		display: flex;
		align-items: center;
		justify-content: center;
		width: 15px;
		height: 15px;
		flex: none;
		box-sizing: border-box;
		border-right: 1px solid #777;
		background: #b0b0b0;
	}

	.word {
		display: flex;
		align-items: center;
		height: 15px;
		padding: 0 1px;
		flex: none;
		border-right: 1px solid #777;
		background: #b0b0b0;
	}

	.lit {
		background: #b4dcec;
	}

	.hole {
		width: 16px;
	}

	.notch {
		width: 4px;
	}

	.end {
		width: 10px;
	}

	/* corner banner */
	.sponsor {
		position: absolute;
		right: 71px;
		bottom: 18px;
		display: flex;
		align-items: center;
		gap: 16px;
		width: 222px;
		height: 115px;
		padding-left: 13px;
		color: #c8cbd3;
		background: #223058;
	}

	.sponsor svg {
		width: 48px;
		height: 52px;
		fill: none;
		stroke: #c8cbd3;
		stroke-width: 4;
	}

	.sponsor .thin {
		stroke-width: 1;
	}

	.sponsor strong,
	.sponsor span {
		display: block;
		white-space: nowrap;
	}

	.sponsor strong {
		font-size: 36px;
		line-height: 40px;
	}

	.sponsor span {
		font-family: "DejaVu Sans", sans-serif;
		font-size: 17px;
		line-height: 18px;
	}
</style>
